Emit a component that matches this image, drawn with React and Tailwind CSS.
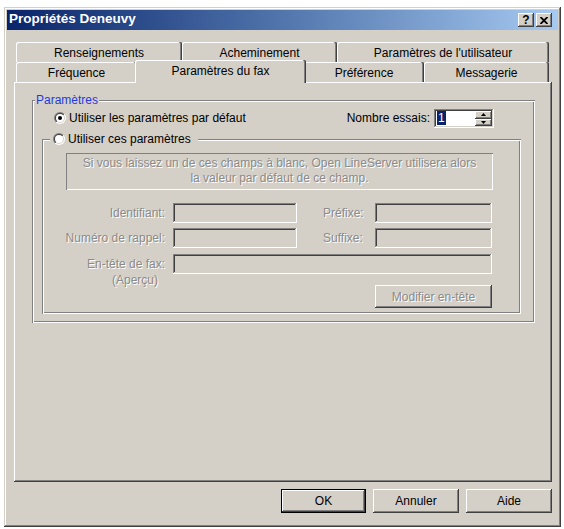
import React from 'react';

// classic 3D edges
const raised = 'shadow-[inset_-1px_-1px_0_#404040,inset_1px_1px_0_#ffffff,inset_-2px_-2px_0_#808080]';
const sunken = 'shadow-[inset_-1px_-1px_0_#ffffff,inset_1px_1px_0_#808080,inset_-2px_-2px_0_#d4d0c8,inset_2px_2px_0_#404040]';
const etched = 'shadow-[inset_1px_1px_0_#808080,inset_2px_2px_0_#ffffff,inset_-1px_-1px_0_#ffffff,inset_-2px_-2px_0_#808080]';
const tabEdge = 'shadow-[inset_-1px_0_0_#404040,inset_-2px_0_0_#808080,inset_1px_1px_0_#ffffff]';
const grayText = 'text-[#8a8a8a] [text-shadow:1px_1px_0_#ffffff]';

const Radio = ({ checked, id }) => (
    <svg width="12" height="12" viewBox="0 0 12 12" className="shrink-0">
        <defs>
            <linearGradient id={`${id}-o`} x1="0" y1="0" x2="1" y2="1">
                <stop offset="0.5" stopColor="#808080" />
                <stop offset="0.5" stopColor="#ffffff" />
            </linearGradient>
            <linearGradient id={`${id}-i`} x1="0" y1="0" x2="1" y2="1">
                <stop offset="0.5" stopColor="#404040" />
                <stop offset="0.5" stopColor="#d4d0c8" />
            </linearGradient>
        </defs>
        <circle cx="6" cy="6" r="6" fill={`url(#${id}-o)`} />
        <circle cx="6" cy="6" r="5" fill={`url(#${id}-i)`} />
        <circle cx="6" cy="6" r="4" fill="#ffffff" />
        {checked && <circle cx="6" cy="6" r="2" fill="#000000" />}
    </svg>
);

const TitleButton = ({ children }) => (
    <div className={`w-[16px] h-[14px] bg-[#d4d0c8] ${raised} flex items-center justify-center`}>
        {children}
    </div>
);

const Field = ({ className }) => (
    <div className={`h-[20px] bg-[#d4d0c8] ${sunken} ${className}`} />
);

const Arrow = ({ up }) => (
    <svg width="5" height="3" viewBox="0 0 5 3">
        <path d={up ? 'M2.5 0 L5 3 L0 3 Z' : 'M0 0 L5 0 L2.5 3 Z'} fill="#000000" />
    </svg>
);

const App = () => {
    return (
        <div className="min-h-[529px] bg-white pt-[7px] pl-[4px] font-['Liberation_Sans',Arial,sans-serif] text-[12px] text-black">
            <div className={`w-[557px] h-[520px] bg-[#d4d0c8] p-[3px] flex flex-col shadow-[inset_-1px_-1px_0_#404040,inset_1px_1px_0_#d4d0c8,inset_-2px_-2px_0_#808080,inset_2px_2px_0_#ffffff]`}>
                {/* TITLE BAR */}
                <div className="h-[20px] shrink-0 flex items-center justify-between bg-linear-to-r from-[#0a246a] to-[#a6caf0] pl-[2px] pr-[6px]">
                    <span className="text-white font-bold text-[13.5px] leading-none -mt-[2px]">Propriétés Deneuvy</span>
                    <div className="flex gap-[2px]">
                        <TitleButton>
                            <span className="font-bold text-[12px] leading-none">?</span>
                        </TitleButton>
                        <TitleButton>
                            <svg width="8" height="7" viewBox="0 0 8 7">
                                <path d="M0.5 0 L7.5 7 M7.5 0 L0.5 7" stroke="#000000" strokeWidth="1.8" />
                            </svg>
                        </TitleButton>
                    </div>
                </div>

                <div className="pl-[7px] pt-[12px]">
                    {/* TABS back row */}
                    <div className="flex h-[20px] ml-[2px]">
                        <div className={`w-[166px] rounded-t-[2px] ${tabEdge} flex items-center justify-center pt-[2px]`}>Renseignements</div>
                        <div className={`w-[155px] rounded-t-[2px] ${tabEdge} flex items-center justify-center pt-[2px]`}>Acheminement</div>
                        <div className={`w-[212px] rounded-t-[2px] ${tabEdge} flex items-center justify-center pt-[2px]`}>Paramètres de l'utilisateur</div>
                    </div>
                    {/* TABS front row */}
                    <div className="flex h-[20px] ml-[2px] items-start">
                        <div className={`w-[121px] h-[20px] rounded-t-[2px] ${tabEdge} flex items-center justify-center pt-[2px]`}>Fréquence</div>
                        <div className={`relative z-10 w-[171px] h-[23px] -mx-[2px] -mt-[2px] bg-[#d4d0c8] rounded-t-[2px] ${tabEdge} text-center pt-[4px] leading-[15px]`}>
                            Paramètres du fax
                        </div>
                        <div className={`w-[120px] h-[20px] rounded-t-[2px] ${tabEdge} flex items-center justify-center pt-[2px]`}>Préférence</div>
                        <div className={`w-[125px] h-[20px] rounded-t-[2px] ${tabEdge} flex items-center justify-center pt-[2px]`}>Messagerie</div>
                    </div>

                    {/* PANEL */}
                    <div className={`w-[538px] h-[400px] ${raised} pt-[18px] pl-[18px] pr-[17px]`}>
                        <div className={`relative flex flex-col ${etched} pb-[9px]`}>
                            <span className="absolute -top-[7px] left-[3px] bg-[#d4d0c8] px-[1px] leading-[14px] text-[#1f3be0]">Paramètres</span>

                            <div className="flex items-center h-[20px] mt-[8px] pl-[22px] pr-[41px]">
                                <Radio checked id="r1" />
                                <span className="ml-[3px]">Utiliser les paramètres par défaut</span>
                                <span className="ml-auto mr-[4px]">Nombre essais:</span>
                                <div className={`w-[60px] h-[19px] bg-white ${sunken} flex items-center`}>
                                    <span className="ml-[3px] px-[1px] bg-[#0a246a] text-white leading-[14px]">1</span>
                                    <div className="ml-auto mr-[2px] flex flex-col">
                                        <div className={`w-[17px] h-[8px] bg-[#d4d0c8] ${raised} flex items-center justify-center`}>
                                            <Arrow up />
                                        </div>
                                        <div className={`w-[17px] h-[7px] bg-[#d4d0c8] ${raised} flex items-center justify-center`}>
                                            <Arrow />
                                        </div>
                                    </div>
                                </div>
                            </div>

                            {/* inner group */}
                            <div className={`relative flex flex-col mt-[11px] ml-[10px] mr-[14px] ${etched} pb-[6px]`}>
                                <div className="absolute -top-[7px] left-[8px] h-[14px] flex items-center bg-[#d4d0c8] pl-[3px] pr-[7px]">
                                    <Radio id="r2" />
                                    <span className="ml-[3px]">Utiliser ces paramètres</span>
                                </div>

                                <div className={`mt-[14px] ml-[24px] w-[427px] h-[37px] shadow-[inset_1px_1px_0_#808080,inset_-1px_-1px_0_#ffffff] pt-[3px] text-center leading-[15px] whitespace-nowrap ${grayText}`}>
                                    Si vous laissez un de ces champs à blanc, Open LineServer utilisera alors
                                    <br />
                                    la valeur par défaut de ce champ.
                                </div>

                                <div className="flex items-center h-[20px] mt-[13px]">
                                    <span className={`w-[131px] pr-[8px] text-right ${grayText}`}>Identifiant:</span>
                                    <Field className="w-[124px]" />
                                    <span className={`w-[78px] pl-[26px] ${grayText}`}>Préfixe:</span>
                                    <Field className="w-[117px]" />
                                </div>
                                <div className="flex items-center h-[20px] mt-[5px]">
                                    <span className={`w-[131px] pr-[8px] text-right ${grayText}`}>Numéro de rappel:</span>
                                    <Field className="w-[124px]" />
                                    <span className={`w-[78px] pl-[26px] ${grayText}`}>Suffixe:</span>
                                    <Field className="w-[117px]" />
                                </div>
                                <div className="flex items-start h-[20px] mt-[6px]">
                                    <div className={`w-[131px] pr-[8px] text-right pt-[2px] leading-[16px] ${grayText}`}>
                                        <div>En-tête de fax:</div>
                                        <div className="pr-[7px]">(Aperçu)</div>
                                    </div>
                                    <Field className="w-[319px]" />
                                </div>
                                <div className="mt-[11px] pl-[333px]">
                                    <div className={`w-[117px] h-[23px] ${raised} flex items-center justify-center ${grayText}`}>
                                        Modifier en-tête
                                    </div>
                                </div>
                            </div>
                        </div>
                    </div>

                    {/* DIALOG BUTTONS */}
                    <div className="flex justify-end gap-[7px] mt-[7px] w-[538px]">
                        <div className="w-[85px] h-[24px] border border-black">
                            <div className={`w-full h-full ${raised} flex items-center justify-center`}>OK</div>
                        </div>
                        <div className={`w-[86px] h-[24px] ${raised} flex items-center justify-center`}>Annuler</div>
                        <div className={`w-[86px] h-[24px] ${raised} flex items-center justify-center`}>Aide</div>
                    </div>
                </div>
            </div>
        </div>
    );
};

export default App;
